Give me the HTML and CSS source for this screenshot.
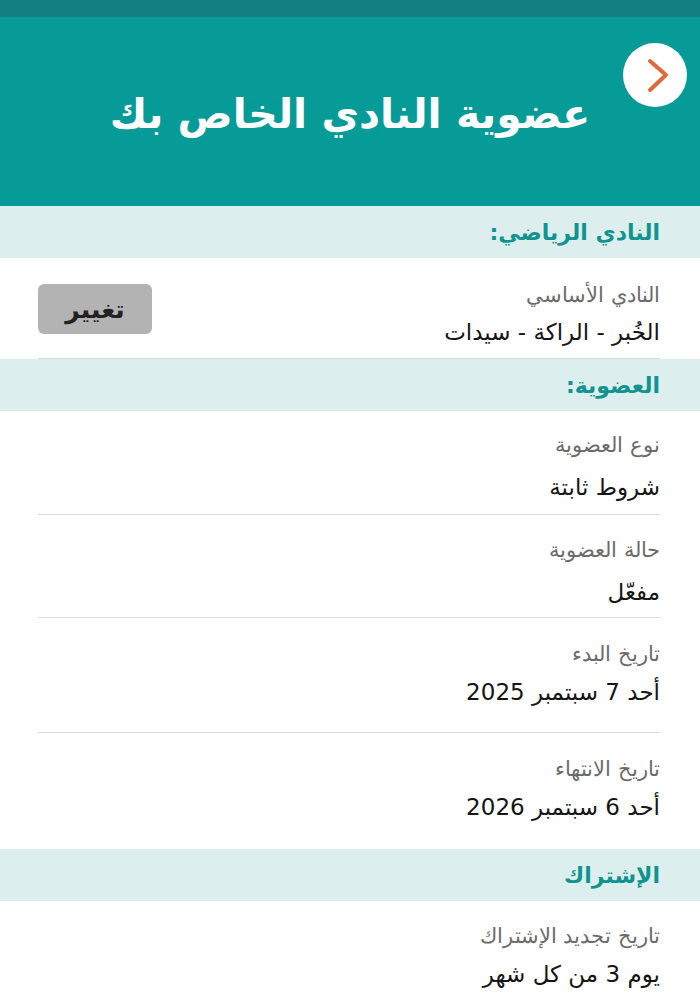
FILE: index.html
```html
<!DOCTYPE html>
<html lang="ar" dir="rtl">
<head>
<meta charset="utf-8">
<link rel="stylesheet" href="styles.css">
</head>
<body>
<div class="topbar"></div>
<header class="header">
  <button class="back" aria-label="رجوع">
    <svg width="64" height="64" viewBox="0 0 64 64"><path d="M27 18 L43 32 L27 47" fill="none" stroke="#e0693a" stroke-width="4" stroke-linecap="round" stroke-linejoin="round"/></svg>
  </button>
  <h1 class="title">عضوية النادي الخاص بك</h1>
</header>

<section>
  <div class="sec-head">النادي الرياضي:</div>
  <div class="row row-club">
    <div class="info">
      <div class="label">النادي الأساسي</div>
      <div class="value value-club">الخُبر - الراكة - سيدات</div>
    </div>
    <button class="change">تغيير</button>
  </div>
</section>

<section>
  <div class="sec-head">العضوية:</div>
  <div class="row r1">
    <div class="info">
      <div class="label">نوع العضوية</div>
      <div class="value v-gap">شروط ثابتة</div>
    </div>
  </div>
  <div class="row r2">
    <div class="info">
      <div class="label">حالة العضوية</div>
      <div class="value v-gap">مفعّل</div>
    </div>
  </div>
  <div class="row r3">
    <div class="info">
      <div class="label">تاريخ البدء</div>
      <div class="value">أحد 7 سبتمبر 2025</div>
    </div>
  </div>
  <div class="row r4 last">
    <div class="info">
      <div class="label">تاريخ الانتهاء</div>
      <div class="value">أحد 6 سبتمبر 2026</div>
    </div>
  </div>
</section>

<section>
  <div class="sec-head">الإشتراك</div>
  <div class="row r5 last">
    <div class="info">
      <div class="label">تاريخ تجديد الإشتراك</div>
      <div class="value">يوم 3 من كل شهر</div>
    </div>
  </div>
</section>
</body>
</html>
```
FILE: styles.css
```css
* { box-sizing: border-box; }
html, body { margin: 0; padding: 0; }
body {
  width: 700px;
  background: #ffffff;
  font-family: "DejaVu Sans", "Noto Sans", sans-serif;
  color: #111;
  overflow: hidden;
}
.topbar { height: 17px; background: #137f80; }
.header {
  position: relative;
  height: 189px;
  background: #079b98;
  display: flex;
  align-items: center;
  justify-content: center;
}
.title {
  margin: 4px 0 0 0;
  color: #ffffff;
  font-size: 41px;
  font-weight: bold;
  line-height: 48px;
}
.back {
  position: absolute;
  top: 26px;
  right: 13px;
  width: 64px;
  height: 64px;
  border-radius: 50%;
  border: none;
  padding: 0;
  background: #ffffff;
  display: flex;
  align-items: center;
  justify-content: center;
}
.back svg { display: block; }
.sec-head {
  height: 52px;
  background: #dcefee;
  padding: 0 40px;
  display: flex;
  align-items: center;
  color: #119390;
  font-size: 22px;
  font-weight: bold;
}
.row {
  margin: 0 40px 0 38px;
  border-bottom: 1px solid #dadada;
  display: flex;
  align-items: flex-start;
  justify-content: space-between;
}
.row.last { border-bottom: none; }
.label {
  font-size: 21px;
  line-height: 32px;
  color: #6b6b6b;
  font-weight: 300;
}
.value {
  font-size: 23px;
  line-height: 44px;
  color: #151515;
}
.value-club { line-height: 42px; }
.v-gap { margin-top: 4px; }
.row-club { padding: 21px 0 5px; }
.r1 { padding: 18px 0 5px; }
.r2 { padding: 19px 0 3px; }
.r3 { padding: 20px 0 18px; }
.r4 { padding: 20px 0 20px; }
.r5 { padding: 19px 0 4px; }
.change {
  margin-top: 5px;
  width: 114px;
  height: 50px;
  border: none;
  border-radius: 6px;
  background: #b3b3b3;
  font-family: "DejaVu Sans", sans-serif;
  font-size: 25px;
  font-weight: bold;
  color: #222;
}
```
